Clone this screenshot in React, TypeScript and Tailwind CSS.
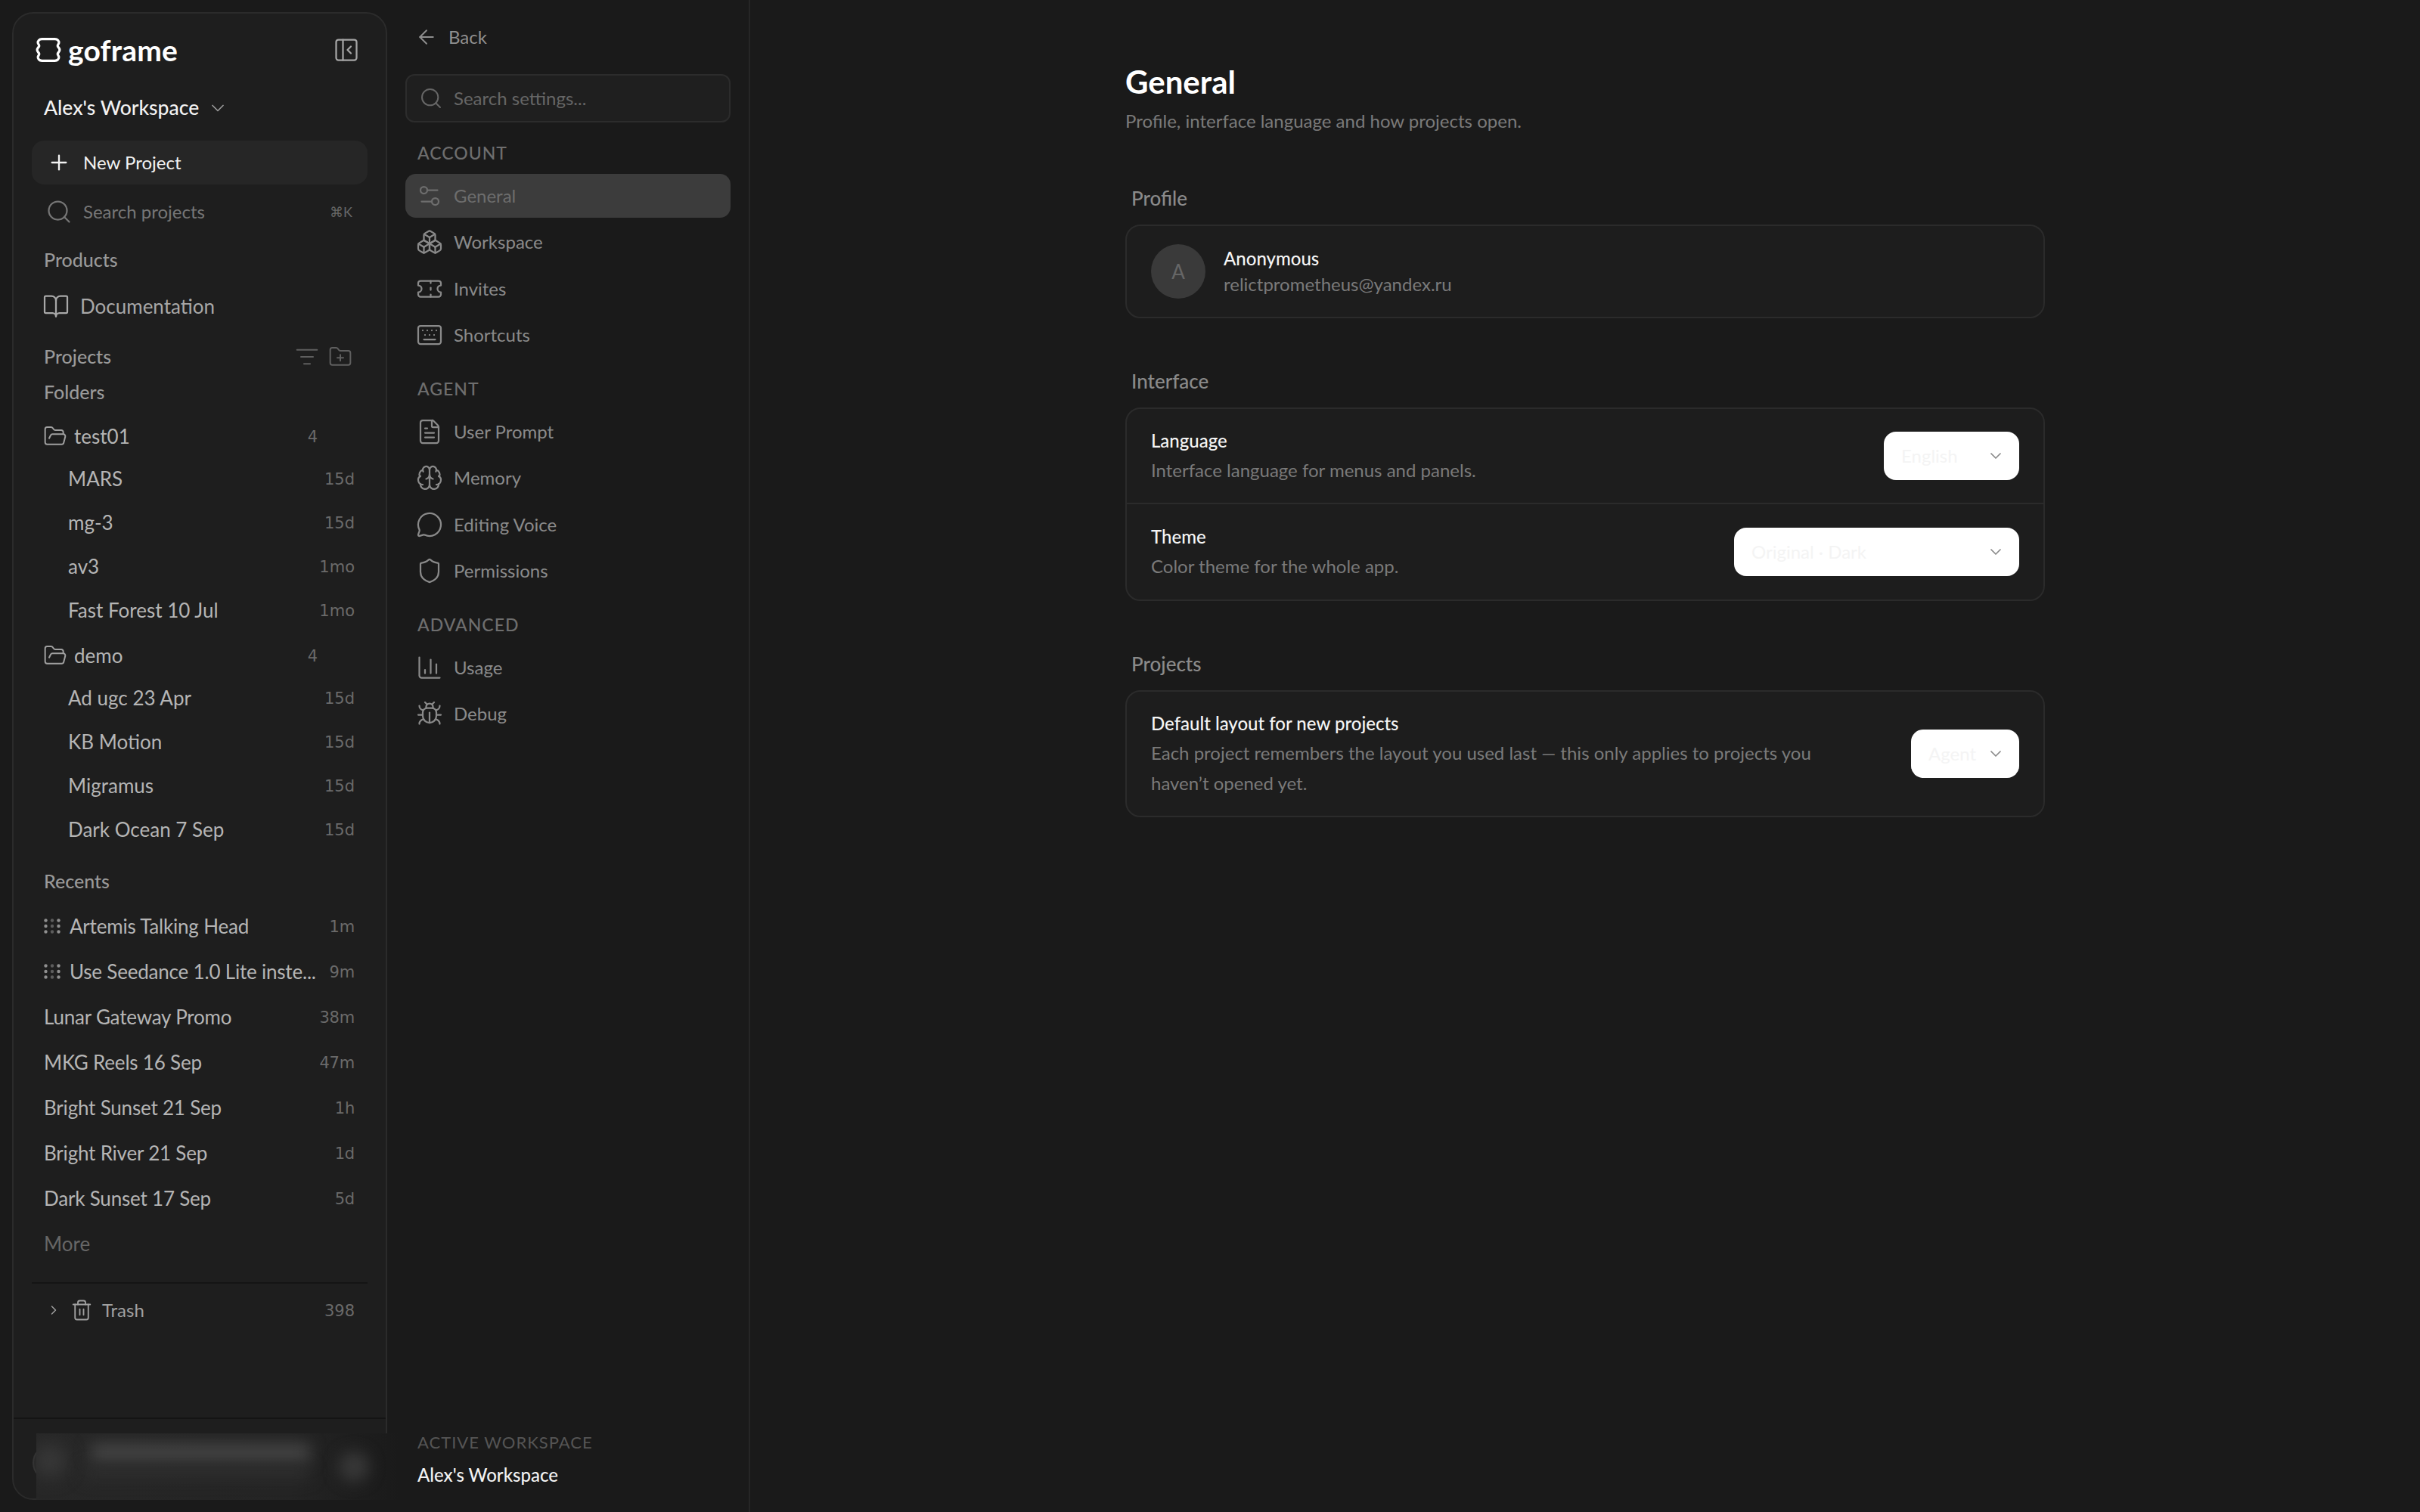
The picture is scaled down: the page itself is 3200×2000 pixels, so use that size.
import React from 'react';
import {
  ArrowLeft,
  BookOpen,
  Boxes,
  Brain,
  Bug,
  ChartColumn,
  ChevronDown,
  ChevronRight,
  FileText,
  FolderOpen,
  FolderPlus,
  Keyboard,
  ListFilter,
  MessageCircle,
  PanelLeftClose,
  Plus,
  Search,
  Settings2,
  Shield,
  Ticket,
  Trash2,
} from 'lucide-react';

const folders = [
  {
    name: 'test01',
    count: 4,
    items: [
      { name: 'MARS', age: '15d' },
      { name: 'mg-3', age: '15d' },
      { name: 'av3', age: '1mo' },
      { name: 'Fast Forest 10 Jul', age: '1mo' },
    ],
  },
  {
    name: 'demo',
    count: 4,
    items: [
      { name: 'Ad ugc 23 Apr', age: '15d' },
      { name: 'KB Motion', age: '15d' },
      { name: 'Migramus', age: '15d' },
      { name: 'Dark Ocean 7 Sep', age: '15d' },
    ],
  },
];

const recents = [
  { name: 'Artemis Talking Head', age: '1m', busy: true },
  { name: 'Use Seedance 1.0 Lite inste...', age: '9m', busy: true },
  { name: 'Lunar Gateway Promo', age: '38m' },
  { name: 'MKG Reels 16 Sep', age: '47m' },
  { name: 'Bright Sunset 21 Sep', age: '1h' },
  { name: 'Bright River 21 Sep', age: '1d' },
  { name: 'Dark Sunset 17 Sep', age: '5d' },
];

const settingsNav = [
  {
    title: 'ACCOUNT',
    items: [
      { label: 'General', icon: Settings2, active: true },
      { label: 'Workspace', icon: Boxes },
      { label: 'Invites', icon: Ticket },
      { label: 'Shortcuts', icon: Keyboard },
    ],
  },
  {
    title: 'AGENT',
    items: [
      { label: 'User Prompt', icon: FileText },
      { label: 'Memory', icon: Brain },
      { label: 'Editing Voice', icon: MessageCircle },
      { label: 'Permissions', icon: Shield },
    ],
  },
  {
    title: 'ADVANCED',
    items: [
      { label: 'Usage', icon: ChartColumn },
      { label: 'Debug', icon: Bug },
    ],
  },
];

const LogoMark = () => (
  <svg width="34" height="34" viewBox="0 0 32 32" fill="none" stroke="#fff" strokeWidth="3">
    <path d="M8 2.5H24C27.5 2.5 29.5 5 29 7.5C28.7 9 27.5 9.5 27.5 11C27.5 12.5 30 13.5 30 16C30 18.5 27.5 19.5 27.5 21C27.5 22.5 28.7 23 29 24.5C29.5 27 27.5 29.5 24 29.5H8C4.5 29.5 2.5 27 3 24.5C3.3 23 4.5 22.5 4.5 21C4.5 19.5 2 18.5 2 16C2 13.5 4.5 12.5 4.5 11C4.5 9.5 3.3 9 3 7.5C2.5 5 4.5 2.5 8 2.5Z" />
  </svg>
);

const DotGrid = () => (
  <svg width="22" height="20" viewBox="0 0 22 20" fill="#8f8f8f" className="shrink-0">
    {[2.5, 10, 17.5].map((cy) => (
      <React.Fragment key={cy}>
        <circle cx="2.5" cy={cy} r="2.2" />
        <circle cx="11" cy={cy} r="2.2" opacity="0.55" />
        <circle cx="19.5" cy={cy} r="2.2" />
      </React.Fragment>
    ))}
  </svg>
);

const Age = ({ children }: { children: React.ReactNode }) => (
  <span className="mt-[3px] shrink-0 text-[21px] text-[#6a6a6a] [font-family:'DejaVu_Sans',sans-serif]">{children}</span>
);

const Sidebar = () => (
  <aside className="flex h-full w-[496px] flex-col rounded-[28px] border-2 border-[#2b2b2b] bg-[#1e1e1e]">
    <div className="flex flex-col px-6 pt-[30px]">
      <div className="flex h-9 items-center justify-between pl-[5px] pr-[10px]">
        <div className="flex items-center gap-[9px]">
          <LogoMark />
          <span className="text-[39px] leading-none font-bold tracking-[0.2px] text-white">goframe</span>
        </div>
        <PanelLeftClose size={36} strokeWidth={1.5} className="text-[#a5a5a5]" />
      </div>

      <div className="mt-[37px] flex h-11 items-center gap-[11px] pl-4 text-[26.5px] font-medium text-[#f2f2f2]">
        Alex's Workspace
        <ChevronDown size={28} strokeWidth={1.5} className="text-[#9a9a9a]" />
      </div>

      <div className="mt-[21px] flex h-[58px] items-center gap-[16px] rounded-2xl bg-[#262626] pl-5 text-[24px] text-[#f2f2f2]">
        <Plus size={32} strokeWidth={1.75} />
        New Project
      </div>

      <div className="mt-[7px] mb-px flex h-[58px] items-center justify-between pl-[18px] pr-[20px]">
        <div className="flex items-center gap-[14px] text-[24px] text-[#767676]">
          <Search size={36} strokeWidth={1.5} />
          Search projects
        </div>
        <span className="text-[18px] text-[#666]">⌘K</span>
      </div>

      <div className="mt-4 flex h-9 items-center pl-4 text-[25px] font-medium text-[#999]">Products</div>
      <div className="mt-[17px] flex h-[52px] items-center gap-[14px] pl-[14px] text-[26px] text-[#a8a8a8]">
        <BookOpen size={36} strokeWidth={1.5} />
        Documentation
      </div>

      <div className="mt-[23px] flex h-9 items-center justify-between pl-4 pr-[20px] text-[25px] font-medium text-[#999]">
        Projects
        <div className="flex items-center gap-[12px] text-[#5f5f5f]">
          <ListFilter size={32} strokeWidth={1.5} />
          <FolderPlus size={32} strokeWidth={1.5} />
        </div>
      </div>
      <div className="mt-[11px] flex h-9 items-center pl-4 text-[25px] font-medium text-[#999]">Folders</div>

      <div className="mt-[13px] flex flex-col">
        {folders.map((folder, i) => (
          <div key={folder.name} className={i > 0 ? 'mt-1' : ''}>
            <div className="flex h-[54px] items-center justify-between pl-[15px] pr-[66px] text-[26px] text-[#b5b5b5]">
              <span className="flex items-center gap-[9px]">
                <FolderOpen size={32} strokeWidth={1.5} className="text-[#a0a0a0]" />
                {folder.name}
              </span>
              <Age>{folder.count}</Age>
            </div>
            {folder.items.map((item) => (
              <div key={item.name} className="flex h-[58px] items-center justify-between pl-[48px] pr-[17px] text-[26px] text-[#b5b5b5]">
                {item.name}
                <Age>{item.age}</Age>
              </div>
            ))}
          </div>
        ))}
      </div>

      <div className="mt-[22px] flex h-9 items-center pl-4 text-[25px] font-medium text-[#999]">Recents</div>
      <div className="mt-[11px] flex flex-col">
        {recents.map((item) => (
          <div key={item.name} className="flex h-[60px] items-center justify-between gap-4 pl-4 pr-[17px] text-[26px] tracking-[-0.2px] text-[#b5b5b5]">
            <span className="flex min-w-0 items-center gap-3 whitespace-nowrap">
              {item.busy && <DotGrid />}
              {item.name}
            </span>
            <Age>{item.age}</Age>
          </div>
        ))}
        <div className="flex h-[60px] items-center pl-4 text-[26px] text-[#666]">More</div>
      </div>

      <div className="mt-[21px] border-t-2 border-[#141414]" />
      <div className="mt-[5px] flex h-[60px] items-center justify-between pl-[19px] pr-[17px]">
        <span className="flex items-center gap-[12px] text-[24px] text-[#a0a0a0]">
          <ChevronRight size={20} strokeWidth={1.75} className="text-[#a0a0a0]" />
          <Trash2 size={30} strokeWidth={1.5} className="text-[#a0a0a0]" />
          Trash
        </span>
        <Age>398</Age>
      </div>
    </div>
    <div className="mt-auto h-[107px] border-t-2 border-[#141414]" />
  </aside>
);

const SettingsNav = () => (
  <nav className="flex h-full w-[480px] shrink-0 flex-col border-r-2 border-[#262626] px-6">
    <div className="mt-[29px] flex h-10 items-center gap-[14px] pl-[13px] text-[24px] text-[#8f8f8f]">
      <ArrowLeft size={30} strokeWidth={1.5} />
      Back
    </div>
    <div className="mt-[29px] flex h-16 items-center gap-[14px] rounded-xl border-2 border-[#2c2c2c] bg-[#1f1f1f] pl-[16px] text-[24px] text-[#666]">
      <Search size={32} strokeWidth={1.5} />
      Search settings...
    </div>
    <div className="mt-5 flex flex-col gap-[22px]">
      {settingsNav.map((group) => (
        <div key={group.title}>
          <div className="flex h-10 items-center pl-4 text-[23px] font-medium tracking-[1px] text-[#6e6e6e]">{group.title}</div>
          <div className="mt-2 flex flex-col gap-1">
            {group.items.map((item) => (
              <div
                key={item.label}
                className={`flex h-[57.5px] items-center gap-[14px] rounded-[14px] pl-[14px] text-[24px] ${
                  item.active ? 'bg-[#3c3c3c] text-[#6d6d6d]' : 'text-[#8a8a8a]'
                }`}
              >
                <item.icon size={36} strokeWidth={1.5} />
                {item.label}
              </div>
            ))}
          </div>
        </div>
      ))}
    </div>
    <div className="mt-auto pb-[31px] pl-4">
      <div className="text-[22px] tracking-[1px] text-[#555]">ACTIVE WORKSPACE</div>
      <div className="mt-[9px] text-[24px] font-medium text-[#f2f2f2]">Alex's Workspace</div>
    </div>
  </nav>
);

const SelectBox = ({ value, width }: { value: string; width: string }) => (
  <div className={`flex h-16 shrink-0 items-center justify-between rounded-2xl bg-white pl-[23px] pr-[19px] text-[24px] text-[#f4f4f4] ${width}`}>
    {value}
    <ChevronDown size={24} strokeWidth={1.75} className="text-[#8a8a8a]" />
  </div>
);

const SettingRow = ({
  title,
  desc,
  value,
  width,
  className,
}: {
  title: string;
  desc: React.ReactNode;
  value: string;
  width: string;
  className: string;
}) => (
  <div className={`flex items-center justify-between px-8 ${className}`}>
    <div>
      <div className="text-[24px] font-medium leading-[38px] text-[#f5f5f5]">{title}</div>
      <div className="text-[24px] leading-10 text-[#7a7a7a]">{desc}</div>
    </div>
    <SelectBox value={value} width={width} />
  </div>
);

const Main = () => (
  <main className="min-w-0 flex-1">
    <div className="mx-auto w-[1216px] pt-[84px]">
      <h1 className="text-[42px] leading-12 font-bold text-white">General</h1>
      <p className="mt-2 text-[24px] leading-10 text-[#7a7a7a]">Profile, interface language and how projects open.</p>

      <h2 className="mt-[62px] pl-2 text-[26px] leading-10 font-medium text-[#8a8a8a]">Profile</h2>
      <div className="mt-[15px] flex h-[124px] items-center gap-6 rounded-[20px] border-2 border-[#2b2b2b] bg-[#1d1d1d] px-8">
        <div className="flex size-[72px] items-center justify-center rounded-full bg-[#3a3a3a] text-[26px] text-[#666]">A</div>
        <div>
          <div className="text-[24px] font-medium leading-[34px] text-[#f5f5f5]">Anonymous</div>
          <div className="text-[24px] leading-[34px] text-[#7a7a7a]">relictprometheus@yandex.ru</div>
        </div>
      </div>

      <h2 className="mt-[63px] pl-2 text-[26px] leading-10 font-medium text-[#8a8a8a]">Interface</h2>
      <div className="mt-[15px] rounded-[20px] border-2 border-[#2b2b2b] bg-[#1d1d1d]">
        <SettingRow
          title="Language"
          desc="Interface language for menus and panels."
          value="English"
          width="w-[179px]"
          className="h-[126px] border-b-2 border-[#2b2b2b]"
        />
        <SettingRow
          title="Theme"
          desc="Color theme for the whole app."
          value="Original · Dark"
          width="w-[377px]"
          className="h-[126px]"
        />
      </div>

      <h2 className="mt-[63px] pl-2 text-[26px] leading-10 font-medium text-[#8a8a8a]">Projects</h2>
      <div className="mt-[15px] rounded-[20px] border-2 border-[#2b2b2b] bg-[#1d1d1d]">
        <SettingRow
          title="Default layout for new projects"
          desc={
            <>
              Each project remembers the layout you used last — this only applies to projects you
              <br />
              haven’t opened yet.
            </>
          }
          value="Agent"
          width="w-[143px]"
          className="h-[164px]"
        />
      </div>
    </div>
  </main>
);

export default function App() {
  return (
    <div className="relative flex h-[2000px] w-[3200px] overflow-hidden bg-[#1a1a1a] [font-family:Lato,sans-serif]">
      <div className="h-full w-[512px] shrink-0 py-4 pl-4">
        <Sidebar />
      </div>
      <SettingsNav />
      <Main />

      {/* account row is blurred out in the capture */}
      <div className="absolute left-[43px] top-[1911px] size-12 rounded-full border-2 border-[#333] bg-[#2a2a2a]" />
      <div className="absolute left-12 top-[1896px] h-[88px] w-[480px] overflow-hidden bg-gradient-to-r from-[#272727] via-[#242424] via-70% to-[#1a1a1a]">
        <div className="absolute left-[-4px] top-[14px] size-11 rounded-full bg-[#383838] blur-[12px]" />
        <div className="absolute left-[72px] top-[14px] h-6 w-[290px] bg-[#454545] blur-[10px]" />
        <div className="absolute left-[62px] top-[44px] h-4 w-[300px] bg-[#2e2e2e] blur-[10px]" />
        <div className="absolute left-[400px] top-[24px] size-10 rounded-full bg-[#383838] blur-[10px]" />
      </div>
    </div>
  );
}
